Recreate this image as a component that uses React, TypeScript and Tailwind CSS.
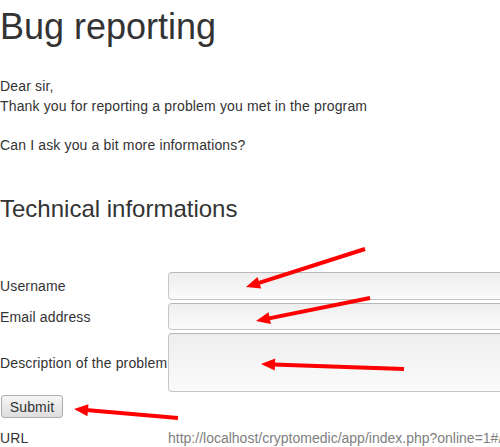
import React from "react";

type ArrowProps = { x1: number; y1: number; x2: number; y2: number };

// red annotation arrow, tip at (x2, y2)
const Arrow = ({ x1, y1, x2, y2 }: ArrowProps) => {
    const dx = x2 - x1;
    const dy = y2 - y1;
    const len = Math.sqrt(dx * dx + dy * dy);
    const ux = dx / len;
    const uy = dy / len;
    const headLen = 14;
    const headW = 6;
    const bx = x2 - ux * headLen;
    const by = y2 - uy * headLen;
    const p1 = `${bx - uy * headW},${by + ux * headW}`;
    const p2 = `${bx + uy * headW},${by - ux * headW}`;
    return (
        <g>
            <line x1={x1} y1={y1} x2={bx + ux * 2} y2={by + uy * 2} stroke="#ff0000" strokeWidth={4} />
            <polygon points={`${x2},${y2} ${p1} ${p2}`} fill="#ff0000" />
        </g>
    );
};

const inputCls =
    "w-[400px] rounded-[4px] border border-[#c6c6c6] border-t-[#b8b8b8] bg-gradient-to-b from-[#eeeeee] to-[#fbfbfb]";

export default function App() {
    return (
        <div
            className="relative w-[500px] h-[447px] overflow-hidden bg-white text-[14px] leading-[20px] tracking-[0.15px] text-[#333]"
            style={{ fontFamily: '"Liberation Sans", Arial, sans-serif' }}
        >
            <h1 className="mt-[7px] text-[36px] leading-[40px] tracking-normal">Bug reporting</h1>

            <div className="mt-[29px]">
                Dear sir,
                <br />
                Thank you for reporting a problem you met in the program
            </div>
            <div className="mt-[19px]">Can I ask you a bit more informations?</div>

            <h2 className="mt-[41px] text-[24px] leading-[26px] tracking-normal">Technical informations</h2>

            <div className="mt-[50px] flex flex-col">
                <div className="flex items-center h-[28px]">
                    <label className="w-[168px] shrink-0">Username</label>
                    <div className={`${inputCls} h-[28px] shrink-0`} />
                </div>
                <div className="flex items-center h-[27px] mt-[3px]">
                    <label className="w-[168px] shrink-0">Email address</label>
                    <div className={`${inputCls} h-[27px] shrink-0`} />
                </div>
                <div className="flex items-center h-[59px] mt-[3px]">
                    <label className="w-[168px] shrink-0 whitespace-nowrap">Description of the problem</label>
                    <div className={`${inputCls} h-[59px] shrink-0`} />
                </div>
                <div className="mt-[3px] flex">
                    <button className="ml-[1px] h-[23px] w-[62px] rounded-[3px] border border-[#adadad] bg-gradient-to-b from-[#f6f6f6] to-[#dedede] text-[14px] leading-[20px] tracking-[0.15px] text-[#333]">
                        Submit
                    </button>
                </div>
                <div className="mt-[10px] flex">
                    <span className="w-[168px] shrink-0">URL</span>
                    <span className="whitespace-nowrap tracking-normal text-[#808080]">
                        http://localhost/cryptomedic/app/index.php?online=1#/home
                    </span>
                </div>
            </div>

            <svg className="absolute inset-0 pointer-events-none" width={500} height={447}>
                <Arrow x1={365} y1={249} x2={246} y2={287} />
                <Arrow x1={370} y1={298} x2={256} y2={321} />
                <Arrow x1={404} y1={369} x2={261} y2={364} />
                <Arrow x1={178} y1={418} x2={74} y2={409} />
            </svg>
        </div>
    );
}
